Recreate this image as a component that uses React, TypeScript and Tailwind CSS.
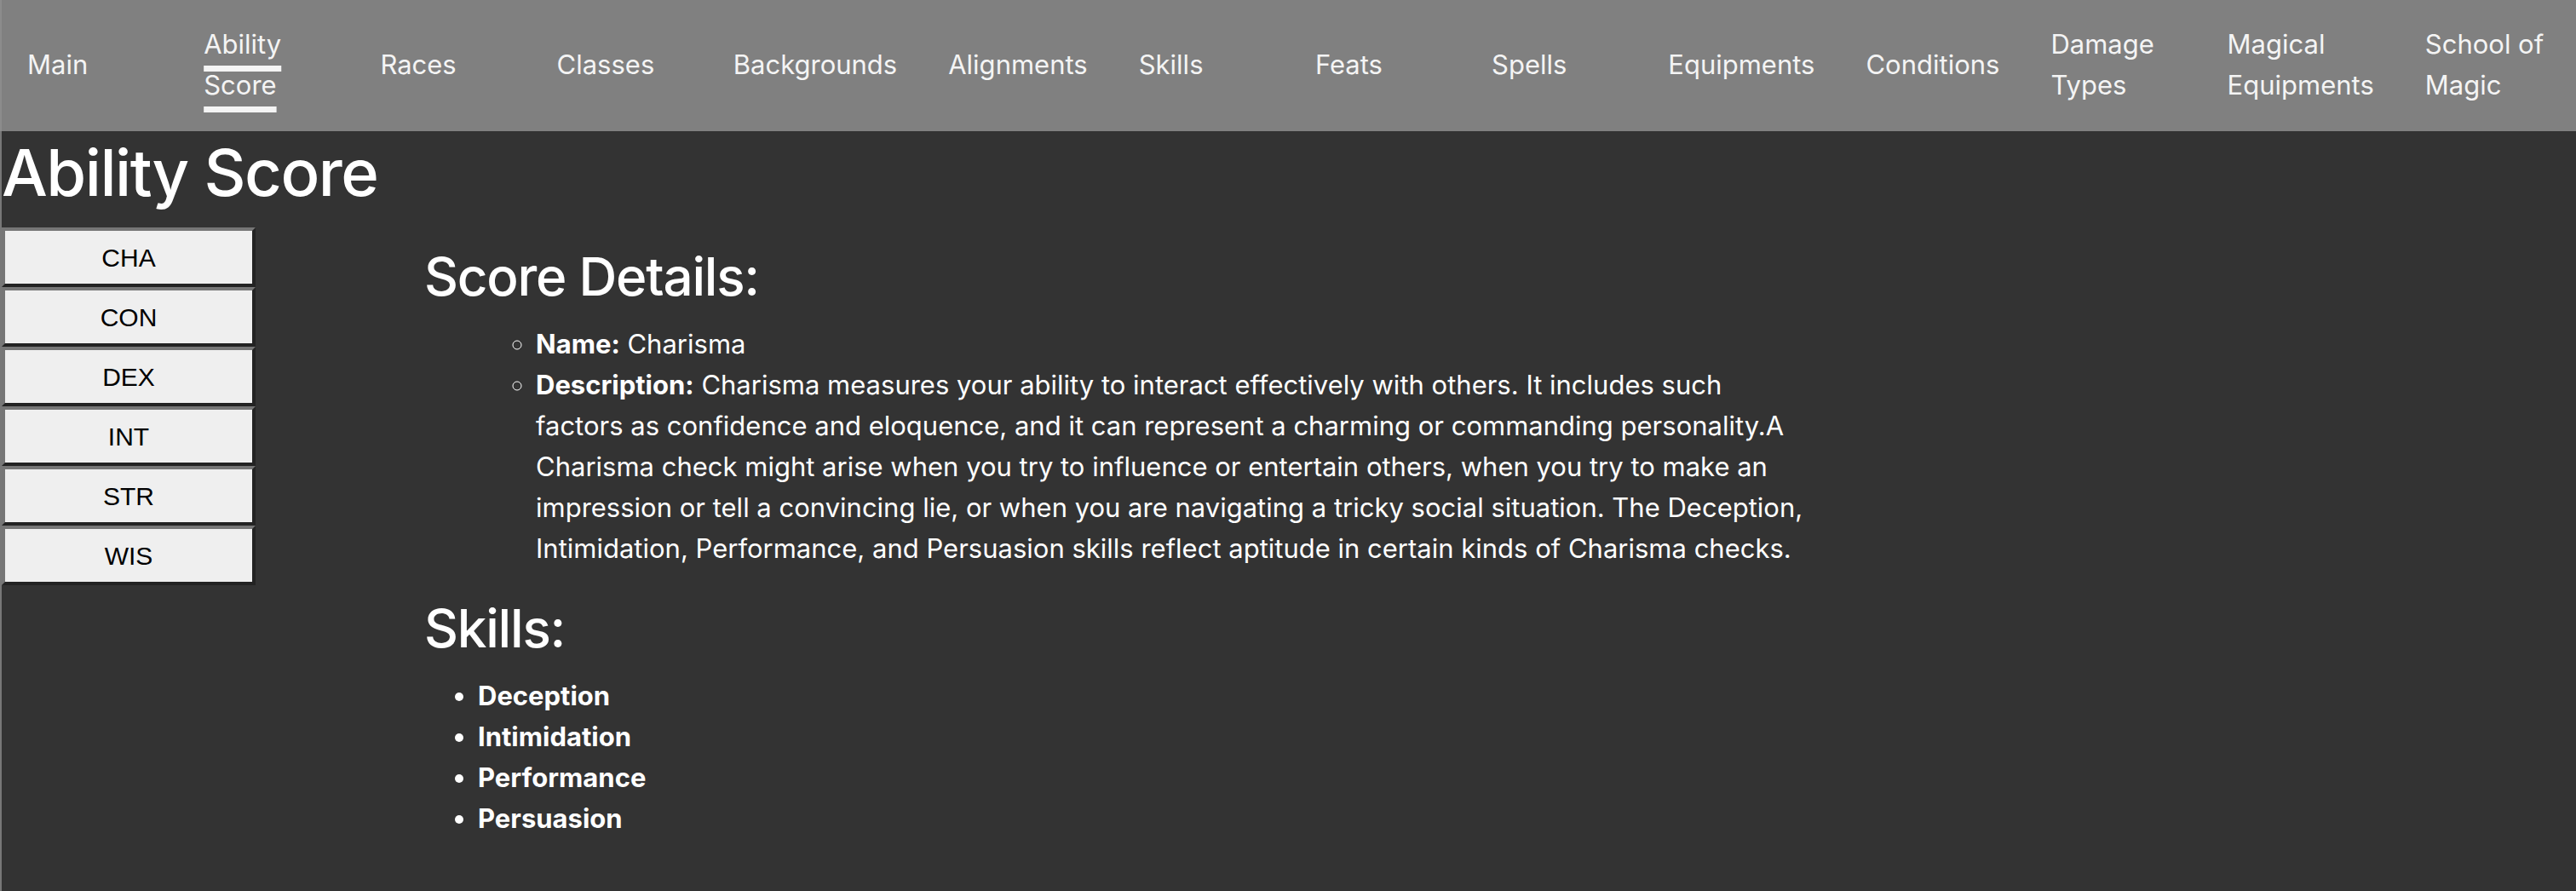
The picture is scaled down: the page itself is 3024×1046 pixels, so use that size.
const NAV_ITEMS = [
  'Main',
  'Ability Score',
  'Races',
  'Classes',
  'Backgrounds',
  'Alignments',
  'Skills',
  'Feats',
  'Spells',
  'Equipments',
  'Conditions',
  'Damage Types',
  'Magical Equipments',
  'School of Magic',
]

const SCORES = ['CHA', 'CON', 'DEX', 'INT', 'STR', 'WIS']

const SKILLS = ['Deception', 'Intimidation', 'Performance', 'Persuasion']

/* ── Nav ─────────────────────────────────────────────────────────────── */

function NavBar({ active }: { active: string }) {
  return (
    <nav className="flex h-[154px] items-center border-l-2 border-[#8c8c8c] bg-[#808080] pb-[3px]">
      {NAV_ITEMS.map((item) => (
        <a
          key={item}
          href="#"
          className={`flex-1 px-[30px] text-[31px] leading-[48px] text-[#f4f4f4] ${
            item === active
              ? 'underline decoration-[#f4f4f4] decoration-[7px] underline-offset-[14px] [text-decoration-skip-ink:none]'
              : ''
          }`}
        >
          {item}
        </a>
      ))}
    </nav>
  )
}

/* ── Score buttons ───────────────────────────────────────────────────── */

function ScoreButtons() {
  return (
    <div className="flex w-[298px] shrink-0 flex-col">
      {SCORES.map((s) => (
        <button
          key={s}
          className="h-[70px] w-full border-4 border-t-[#767676] border-l-[#767676] border-b-[#232323] border-r-[#232323] bg-[#efefef] text-[30px] text-black"
          style={{ fontFamily: '"Liberation Sans", Arial, sans-serif' }}
        >
          {s}
        </button>
      ))}
    </div>
  )
}

/* ── Page ────────────────────────────────────────────────────────────── */

export default function App() {
  return (
    <div
      className="flex min-h-[1046px] flex-col bg-[#333333] text-white"
      style={{ fontFamily: 'Inter, "Noto Sans", sans-serif' }}
    >
      <NavBar active="Ability Score" />

      <main className="flex-1 border-l-2 border-[#777777]">
        <h1 className="h-[96px] text-[76px] font-medium leading-[96px] tracking-[-0.02em]">
          Ability Score
        </h1>

        <div className="mt-[17px] flex">
          <ScoreButtons />

          {/* Details column */}
          <section className="ml-[198px] w-[1628px]">
            <h2 className="mt-[21px] text-[62px] font-medium leading-[74px] tracking-[-0.02em]">
              Score Details:
            </h2>
            <ul className="mt-[18px] list-[circle] pl-[131px] text-[31px] leading-[48px]">
              <li>
                <b>Name:</b> Charisma
              </li>
              <li>
                <b>Description:</b> Charisma measures your ability to interact effectively with
                others. It includes such factors as confidence and eloquence, and it can represent a
                charming or commanding personality.A Charisma check might arise when you try to
                influence or entertain others, when you try to make an impression or tell a
                convincing lie, or when you are navigating a tricky social situation. The Deception,
                Intimidation, Performance, and Persuasion skills reflect aptitude in certain kinds of
                Charisma checks.
              </li>
            </ul>

            <h2 className="mt-[33px] text-[62px] font-medium leading-[74px] tracking-[-0.02em]">
              Skills:
            </h2>
            <ul className="mt-[18px] list-disc pl-[63px] text-[31px] font-bold leading-[48px]">
              {SKILLS.map((skill) => (
                <li key={skill}>{skill}</li>
              ))}
            </ul>
          </section>
        </div>
      </main>
    </div>
  )
}
